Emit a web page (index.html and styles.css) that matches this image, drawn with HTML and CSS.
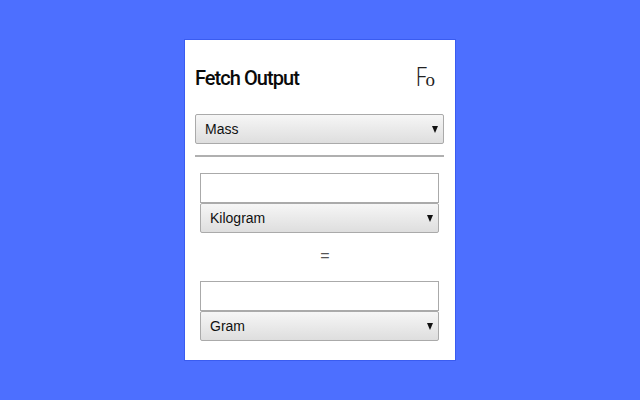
FILE: index.html
```html
<!DOCTYPE html>
<html lang="en">
<head>
    <meta charset="UTF-8">
    <title>Fetch Output</title>
    <link rel="stylesheet" href="styles.css">
</head>
<body>
    <div class="panel">
        <div class="header">
            <h1>Fetch Output</h1>
            <div class="logo"><span class="logo-f">F</span><span class="logo-o">o</span></div>
        </div>
        <div class="select-box">
            <select>
                <option>Mass</option>
            </select>
        </div>
        <hr>
        <div class="converter">
            <input type="text">
            <div class="select-box">
                <select>
                    <option>Kilogram</option>
                </select>
            </div>
            <div class="equals">=</div>
            <input type="text">
            <div class="select-box">
                <select>
                    <option>Gram</option>
                </select>
            </div>
        </div>
    </div>
</body>
</html>
```

FILE: styles.css
```css
html, body {
    height: 100%;
}
body {
    margin: 0;
    display: flex;
    align-items: center;
    justify-content: center;
    background-color: #4d6fff;
    font-family: "Liberation Sans", Arial, sans-serif;
}
.panel {
    width: 270px;
    height: 320px;
    box-sizing: border-box;
    padding: 0 11px 0 10px;
    background-color: #fff;
    box-shadow: 0 0 0 1px #3a5cf0;
}
.header {
    height: 74px;
    display: flex;
    align-items: center;
    justify-content: space-between;
    padding: 1px 9px 0 0;
    box-sizing: border-box;
}
h1 {
    margin: 0;
    font-family: Roboto, sans-serif;
    font-size: 20px;
    font-weight: 500;
    letter-spacing: -0.95px;
    color: #0a0a0a;
}
.logo {
    display: flex;
    align-items: baseline;
    padding-top: 3px;
    line-height: 28px;
    color: #222;
}
.logo-f {
    display: block;
    width: 10px;
    font-family: Roboto, sans-serif;
    font-weight: 300;
    font-size: 25px;
    transform: scaleX(0.8);
    transform-origin: left;
}
.logo-o {
    font-family: "Liberation Serif", serif;
    font-size: 19px;
}
.select-box {
    position: relative;
    height: 30px;
}
.select-box::after {
    content: "";
    position: absolute;
    top: 12px;
    right: 6px;
    border-left: 3.5px solid transparent;
    border-right: 3.5px solid transparent;
    border-top: 7px solid #111;
}
select {
    display: block;
    width: 100%;
    height: 30px;
    box-sizing: border-box;
    padding: 0 0 0 9px;
    appearance: none;
    border: 1px solid #aaa;
    border-radius: 2px;
    background: linear-gradient(#f6f6f6, #dedede);
    font-family: "Liberation Sans", Arial, sans-serif;
    font-size: 14px;
    color: #111;
}
hr {
    height: 2px;
    margin: 11px 0 16px;
    border: 0;
    background-color: #b0b0b0;
}
.converter {
    padding: 0 5px;
}
input {
    display: block;
    width: 100%;
    height: 30px;
    box-sizing: border-box;
    border: 1px solid #aaa;
    background-color: #fff;
}
.equals {
    height: 48px;
    display: flex;
    align-items: center;
    justify-content: center;
    padding: 0 0 2px 11px;
    box-sizing: border-box;
    font-size: 16px;
    color: #555;
}
```
